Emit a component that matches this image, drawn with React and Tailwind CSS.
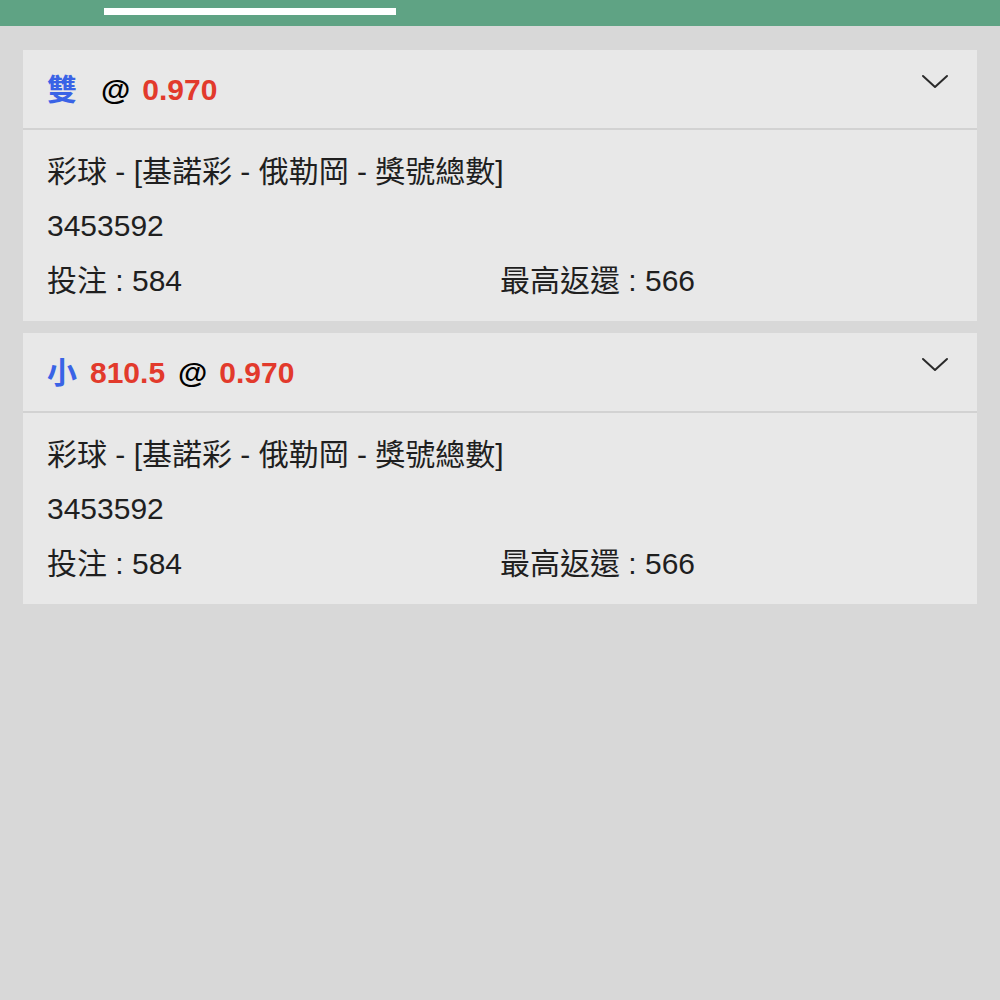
import React from 'react';

const bets = [
  { id: 1, pick: '雙', line: null, odds: '0.970' },
  { id: 2, pick: '小', line: '810.5', odds: '0.970' },
];

function Chevron() {
  return (
    <svg width="28" height="16" viewBox="0 0 28 16" fill="none" className="mt-[-14px]">
      <path d="M2 2 L14 13 L26 2" stroke="#2a2a2a" strokeWidth="2" strokeLinecap="round" strokeLinejoin="round" />
    </svg>
  );
}

function BetCard({ bet }) {
  return (
    <div className="bg-[#e8e8e8]">
      <div className="flex h-[80px] items-center justify-between border-b-2 border-[#d2d2d2] pl-6 pr-7 text-[30px] font-bold">
        <div className="flex items-center">
          <span className="text-[#3a63e6]">{bet.pick}</span>
          {bet.line ? (
            <span className="ml-[13px] text-[#e23a2c]">{bet.line}</span>
          ) : null}
          <span className={`${bet.line ? 'ml-[13px]' : 'ml-[24px]'} text-black`}>@</span>
          <span className="ml-[12px] text-[#e23a2c]">{bet.odds}</span>
        </div>
        <Chevron />
      </div>
      <div className="px-6 pt-[15px] pb-[12px] text-[30px] text-[#1f1f1f]">
        <div className="h-[54px] leading-[54px]">彩球 - [基諾彩 - 俄勒岡 - 獎號總數]</div>
        <div className="h-[54px] leading-[54px]">3453592</div>
        <div className="grid h-[56px] grid-cols-2 leading-[56px]">
          <span>投注 : 584</span>
          <span>最高返還 : 566</span>
        </div>
      </div>
    </div>
  );
}

export default function App() {
  return (
    <div
      className="min-h-[1000px] bg-[#d8d8d8]"
      style={{ fontFamily: '"Liberation Sans", "Noto Sans CJK TC", sans-serif' }}
    >
      <div className="flex h-[26px] items-start bg-[#5fa384] pl-[104px] pt-[8px]">
        <div className="h-[7px] w-[292px] bg-white" />
      </div>
      <div className="flex flex-col gap-3 px-[23px] pt-6">
        {bets.map((b) => (
          <BetCard key={b.id} bet={b} />
        ))}
      </div>
    </div>
  );
}
